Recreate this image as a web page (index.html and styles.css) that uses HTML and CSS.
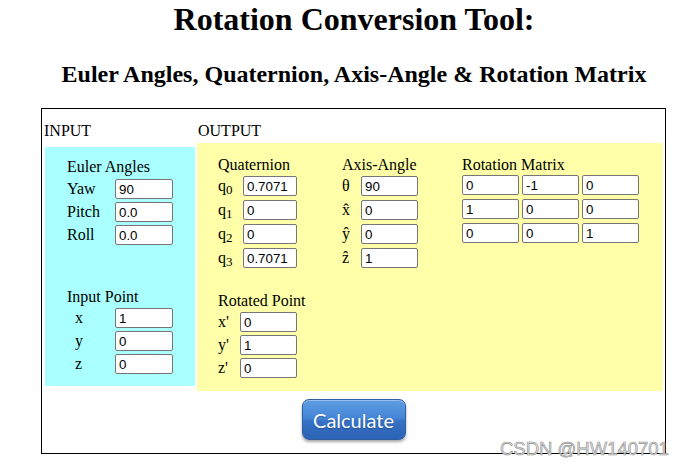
FILE: index.html
```html
<!DOCTYPE html>
<html>
<head>
<meta charset="utf-8">
<title>Rotation Conversion Tool</title>
<link rel="stylesheet" href="styles.css">
</head>
<body>
<div class="page">
  <h1 class="title">Rotation Conversion Tool:</h1>
  <h2 class="subtitle">Euler Angles, Quaternion, Axis-Angle &amp; Rotation Matrix</h2>
  <div class="tool">
    <div class="heads">
      <span class="head-in">INPUT</span>
      <span class="head-out">OUTPUT</span>
    </div>
    <div class="panels">
      <div class="panel-in">
        <div class="group-title">Euler Angles</div>
        <div class="rows rows-euler">
          <span class="lbl">Yaw</span><input class="fld fld-wide" value="90">
          <span class="lbl">Pitch</span><input class="fld fld-wide" value="0.0">
          <span class="lbl">Roll</span><input class="fld fld-wide" value="0.0">
        </div>
        <div class="group-title title-point">Input Point</div>
        <div class="rows rows-point">
          <span class="lbl lbl-ind">x</span><input class="fld fld-wide" value="1">
          <span class="lbl lbl-ind">y</span><input class="fld fld-wide" value="0">
          <span class="lbl lbl-ind">z</span><input class="fld fld-wide" value="0">
        </div>
      </div>
      <div class="panel-out">
        <div class="out-top">
          <div class="col">
            <div class="group-title">Quaternion</div>
            <div class="rows rows-quat">
              <span class="lbl">q<sub>0</sub></span><input class="fld fld-q" value="0.7071">
              <span class="lbl">q<sub>1</sub></span><input class="fld fld-q" value="0">
              <span class="lbl">q<sub>2</sub></span><input class="fld fld-q" value="0">
              <span class="lbl">q<sub>3</sub></span><input class="fld fld-q" value="0.7071">
            </div>
          </div>
          <div class="col">
            <div class="group-title">Axis-Angle</div>
            <div class="rows rows-axis">
              <span class="lbl">θ</span><input class="fld" value="90">
              <span class="lbl">x̂</span><input class="fld" value="0">
              <span class="lbl">ŷ</span><input class="fld" value="0">
              <span class="lbl">ẑ</span><input class="fld" value="1">
            </div>
          </div>
          <div class="col">
            <div class="group-title">Rotation Matrix</div>
            <div class="matrix">
              <input class="fld" value="0"><input class="fld" value="-1"><input class="fld" value="0">
              <input class="fld" value="1"><input class="fld" value="0"><input class="fld" value="0">
              <input class="fld" value="0"><input class="fld" value="0"><input class="fld" value="1">
            </div>
          </div>
        </div>
        <div class="group-title title-rot">Rotated Point</div>
        <div class="rows rows-rot">
          <span class="lbl">x'</span><input class="fld" value="0">
          <span class="lbl">y'</span><input class="fld" value="1">
          <span class="lbl">z'</span><input class="fld" value="0">
        </div>
      </div>
    </div>
    <div class="actions">
      <button class="calc">Calculate</button>
    </div>
  </div>
</div>
<div class="watermark">CSDN @HW140701</div>
</body>
</html>
```
FILE: styles.css
```css
html, body {
  margin: 0;
  padding: 0;
  background: #ffffff;
}
body {
  font-family: "Liberation Serif", "Times New Roman", serif;
  font-size: 16px;
  color: #000;
  position: relative;
  width: 688px;
  height: 466px;
  overflow: hidden;
}
.page {
  margin-left: 41px;
  width: 626px;
}
.title {
  margin: 0;
  padding-top: 1px;
  height: 36px;
  line-height: 36px;
  font-size: 32px;
  font-weight: bold;
  text-align: center;
  white-space: nowrap;
}
.subtitle {
  margin: 22px 0 0 0;
  height: 30px;
  line-height: 30px;
  font-size: 24px;
  font-weight: bold;
  text-align: center;
  white-space: nowrap;
}
.tool {
  margin-top: 19px;
  box-sizing: border-box;
  width: 625px;
  height: 346px;
  border: 1px solid #000;
}
.heads {
  display: flex;
  margin-top: 13px;
  height: 18px;
  line-height: 18px;
  padding-left: 2px;
}
.head-in {
  width: 154px;
}
.panels {
  display: flex;
  align-items: flex-start;
  gap: 2px;
  margin-top: 3px;
  padding-left: 3px;
}
.panel-in {
  box-sizing: border-box;
  width: 150px;
  height: 239px;
  margin-top: 4px;
  background: #aaffff;
  padding: 11px 0 0 22px;
}
.panel-out {
  box-sizing: border-box;
  width: 466px;
  height: 248px;
  background: #ffffaa;
  padding: 13px 0 0 21px;
}
.group-title {
  height: 18px;
  line-height: 18px;
  white-space: nowrap;
}
.rows {
  display: grid;
  grid-auto-rows: 20px;
}
.rows-euler, .rows-point {
  grid-template-columns: 48px 58px;
  row-gap: 3px;
  margin-top: 3px;
}
.rows-point {
  margin-top: 2px;
}
.title-point {
  margin-top: 43px;
}
.lbl {
  line-height: 20px;
  white-space: nowrap;
}
.lbl-ind {
  padding-left: 8px;
}
.lbl sub {
  font-size: 13px;
  line-height: 0;
  vertical-align: -3px;
}
.fld {
  box-sizing: border-box;
  width: 57px;
  height: 20px;
  margin: 0;
  padding: 0 3px;
  border: 1px solid #767676;
  border-radius: 2px;
  background: #ffffff;
  font-family: "Liberation Sans", Arial, sans-serif;
  font-size: 13.33px;
  color: #000;
}
.fld-wide {
  width: 58px;
}
.fld-q {
  width: 54px;
}
.out-top {
  display: grid;
  grid-template-columns: 124px 120px auto;
}
.rows-quat {
  grid-template-columns: 25px 54px;
  row-gap: 4px;
  margin-top: 2px;
}
.rows-axis {
  grid-template-columns: 19px 57px;
  row-gap: 4px;
  margin-top: 2px;
}
.matrix {
  display: grid;
  grid-template-columns: repeat(3, 57px);
  grid-auto-rows: 20px;
  column-gap: 3px;
  row-gap: 4px;
  margin-top: 1px;
}
.title-rot {
  margin-top: 24px;
}
.rows-rot {
  grid-template-columns: 22px 57px;
  row-gap: 3px;
  margin-top: 2px;
}
.actions {
  display: flex;
  justify-content: center;
  margin-top: 8px;
}
.calc {
  box-sizing: border-box;
  width: 104px;
  height: 41px;
  border: 1px solid #2f5f9e;
  border-radius: 7px;
  background: linear-gradient(#5f9de2 0%, #4585d6 45%, #3571c6 55%, #2c63b3 100%);
  box-shadow: 0 2px 3px rgba(0, 0, 0, 0.35), inset 0 1px 0 rgba(255, 255, 255, 0.35);
  color: #ffffff;
  font-family: Lato, "Open Sans", sans-serif;
  font-size: 20px;
  padding: 0;
  text-shadow: 0 1px 1px rgba(0, 0, 0, 0.25);
}
.watermark {
  position: absolute;
  left: 500px;
  top: 438px;
  font-family: "Liberation Sans", Arial, sans-serif;
  font-size: 18.5px;
  color: #e0e0e0;
  -webkit-text-stroke: 0.6px #8e8e8e;
  white-space: nowrap;
}
```
